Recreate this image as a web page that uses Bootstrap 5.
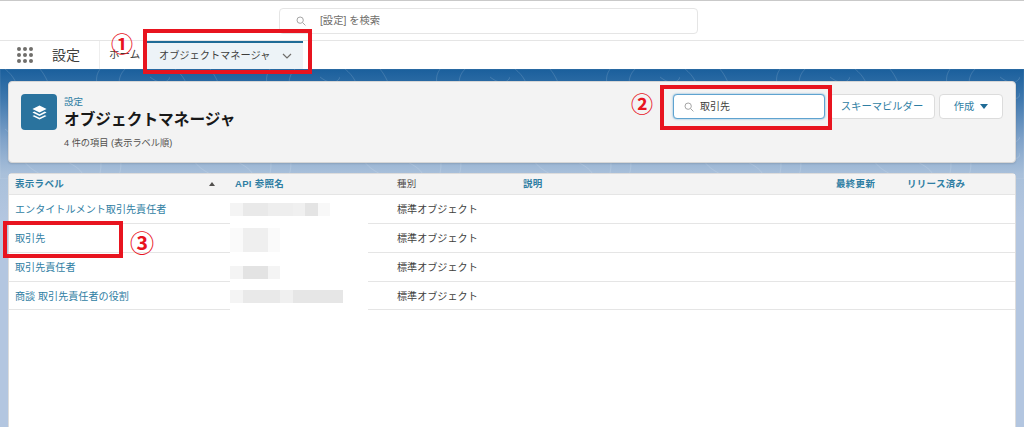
<!DOCTYPE html>
<html lang="ja"><head><meta charset="utf-8"><title>設定</title>
<link href="https://cdn.jsdelivr.net/npm/bootstrap@5.3.0/dist/css/bootstrap.min.css" rel="stylesheet">
<style>
html,body{height:427px;overflow:hidden}
body{position:relative;font-family:"Liberation Sans","Noto Sans CJK JP",sans-serif;font-size:10px;color:#3e3e3c;background:#fff}
.topzone{height:41px;border-top:1px solid #c9c9c9;border-bottom:1px solid #e5e5e5;padding-left:279px}
.gsearch{width:419px;height:26px;border:1px solid #e5e5e5;border-radius:4px;padding-left:16px;gap:14px;color:#706e6b;margin-top:7px;font-size:10.3px}
.tabzone{height:28px}
.waffle{display:grid;grid-template-columns:repeat(3,4px);gap:2px;margin-left:17px;width:16px}
.waffle i{width:4px;height:4px;border-radius:50%;background:#706e6b}
.appname{font-size:14px;margin-left:19px;width:47px;color:#3e3e3c}
.hometab{font-size:10.5px;width:48px;height:28px;border-left:1px solid #eee;padding-left:9px}
.objtab{width:156px;height:28px;background:#edf3f7;border-top:2px solid #1f6b96;font-size:10.2px;padding:0 11px 0 12px;color:#3e3e3c}
.stage{position:relative;height:358px;padding:12px 8px 0;background:linear-gradient(#1a5f9c 0,#3f78ae 30px,#7fa2c9 70px,#a9c0da 105px,#b3c6e0 150px,#b3c6e0 358px)}
.contour{position:absolute;left:0;top:0;width:100%;height:110px}
.headcard{position:relative;height:82px;background:#f3f3f3;border:1px solid #d6d6d6;border-radius:4px;padding:12px 12px;margin-bottom:10px;box-shadow:0 1px 2px rgba(0,0,0,.12)}
.tile{width:36px;height:36px;background:#2a739e;border-radius:4px;margin-right:7px;flex:none}
.crumb{font-size:9.5px;color:#2f7ea3;line-height:11px;margin-top:2px}
.ptitle{font-size:15.7px;font-weight:700;color:#181818;line-height:20px;margin-top:3px}
.pcount{font-size:9.2px;margin-top:7px;color:#514f4d;line-height:12px}
.qfind{width:152px;height:25px;background:#fff;border:1px solid #5fa3d0;border-radius:4px;box-shadow:0 0 2px #5fa3d0;padding-left:10px;gap:6px;color:#3e3e3c;margin-right:4px}
.sfbtn{height:25px;background:#fff;border:1px solid #dcdcdc;border-radius:4px;color:#2f7ea3;font-size:10.3px}
.sbtn1{width:106px;margin-right:4px}.sbtn2{width:64px}
.caretb{width:0;height:0;border:4.5px solid transparent;border-top:5px solid #1f6b96;border-bottom:0;margin-left:6px}
.listcard{position:relative;height:260px;background:#fff;border:1px solid #dcdcdc;border-radius:4px 4px 0 0}
.rowline{display:grid;grid-template-columns:220px 162px 126px 313px 71px 1fr;align-items:center;border-bottom:1px solid #e5e5e5;height:29px;padding-left:6px}
.rowlast{height:28px}
.rowhead{height:21px;background:#f3f3f3;font-weight:700;color:#2f7ea3;font-size:9.5px}
.rowhead .tcell{letter-spacing:.3px}
.rowbody{font-size:10.1px}
.rowbody>div:not(.blurcell){padding-top:2px}
.rowbody a{color:#2f7ea3;text-decoration:none}
.sortup{position:relative}
.sortup::after{content:"";position:absolute;right:20px;top:5px;border:3px solid transparent;border-bottom:4px solid #514f4d;border-top:0}
.tgray{color:#514f4d;font-weight:400}
.blurcell{align-self:stretch;margin:0 29px -1px -5px;background:#fff;display:flex;align-items:center}
.blurbar{display:flex;height:13px}
.blurtall{height:24px;margin-top:3px}
.blurlow{margin-top:10px}
.blurbar i{display:block;height:100%}
.redframe{position:absolute;border:4px solid #e8141f;pointer-events:none}
.numcircle{position:absolute;color:#e8141f;font-weight:700;font-size:22px;line-height:22px;font-family:"Noto Sans CJK JP",sans-serif}
.numbig{font-size:24px;line-height:24px}
</style></head><body>
<div class="topzone d-flex">
  <div class="gsearch d-flex align-items-center">
    <svg width="10" height="10" viewBox="0 0 12 12" fill="none" stroke="#a5a5a5" stroke-width="1.2"><circle cx="5" cy="5" r="3.800"/><path d="M8 8l3.300 3.300"/></svg>
    <span>[設定] を検索</span>
  </div>
</div>
<div class="tabzone d-flex align-items-center">
  <div class="waffle"><i></i><i></i><i></i><i></i><i></i><i></i><i></i><i></i><i></i></div>
  <div class="appname">設定</div>
  <div class="hometab d-flex align-items-center">ホーム</div>
  <div class="objtab d-flex align-items-center justify-content-between"><span>オブジェクトマネージャ</span>
    <svg width="10" height="6" viewBox="0 0 10 6" fill="none" stroke="#706e6b" stroke-width="1.200"><path d="M1 1l4 4 4-4"/></svg></div>
</div>
<div class="stage">
  <svg class="contour" viewBox="0 0 1024 110" preserveAspectRatio="none" fill="none" stroke="#fff" stroke-opacity=".13" stroke-width="1">
    <defs><pattern id="ctr" width="170" height="60" patternUnits="userSpaceOnUse"><path d="M5 0c18 14 10 30 30 42s24 10 30 18M40 0c10 12 8 22 22 30s20 8 28 30M100 0c-12 18 12 26-6 60M125 0c-16 16 8 34-14 60M150 8c10 8 18 6 20 0M150 20c14 14 20 10 20 4"/></pattern></defs>
    <rect width="1024" height="110" fill="url(#ctr)"/>
  </svg>
  <div class="headcard d-flex justify-content-between">
    <div class="d-flex">
      <div class="tile d-flex align-items-center justify-content-center">
        <svg width="17" height="17" viewBox="0 0 18 18" fill="#fff"><path d="M9 1.500l7.500 3.700L9 8.900 1.500 5.200z"/><path d="M3.400 8l5.600 2.800L14.600 8l1.900 1L9 12.700 1.500 9z"/><path d="M3.400 11.800l5.600 2.800 5.600-2.800 1.900 1L9 16.500l-7.500-3.700z"/></svg>
      </div>
      <div><div class="crumb">設定</div><div class="ptitle">オブジェクトマネージャ</div><div class="pcount">4 件の項目 (表示ラベル順)</div></div>
    </div>
    <div class="d-flex align-items-start">
      <div class="qfind d-flex align-items-center">
        <svg width="10" height="10" viewBox="0 0 12 12" fill="none" stroke="#a5a5a5" stroke-width="1.2"><circle cx="5" cy="5" r="3.800"/><path d="M8 8l3.300 3.300"/></svg>
        <span>取引先</span>
      </div>
      <div class="sfbtn sbtn1 d-flex align-items-center justify-content-center">スキーマビルダー</div>
      <div class="sfbtn sbtn2 d-flex align-items-center justify-content-center">作成<span class="caretb"></span></div>
    </div>
  </div>
  <div class="listcard">
    <div class="rowline rowhead">
      <div class="tcell sortup">表示ラベル</div><div class="tcell">API 参照名</div><div class="tcell tgray">種別</div><div class="tcell">説明</div><div class="tcell">最終更新</div><div class="tcell">リリース済み</div>
    </div>
    <div class="rowline rowbody"><div><a href="#">エンタイトルメント取引先責任者</a></div>
      <div class="blurcell"><div class="blurbar"><i style="width:13px;background:#f4f4f4"></i><i style="width:25px;background:#e9e9e9"></i><i style="width:25px;background:#eeeeee"></i><i style="width:12px;background:#f0f0f0"></i><i style="width:13px;background:#e4e4e4"></i><i style="width:12px;background:#f8f8f8"></i></div></div>
      <div>標準オブジェクト</div><div></div><div></div><div></div></div>
    <div class="rowline rowbody"><div><a href="#">取引先</a></div>
      <div class="blurcell"><div class="blurbar blurtall"><i style="width:13px;background:#fafafa"></i><i style="width:25px;background:#efefef"></i><i style="width:12px;background:#fafafa"></i></div></div>
      <div>標準オブジェクト</div><div></div><div></div><div></div></div>
    <div class="rowline rowbody"><div><a href="#">取引先責任者</a></div>
      <div class="blurcell"><div class="blurbar blurlow"><i style="width:13px;background:#f4f4f4"></i><i style="width:25px;background:#e3e3e3"></i><i style="width:12px;background:#f4f4f4"></i></div></div>
      <div>標準オブジェクト</div><div></div><div></div><div></div></div>
    <div class="rowline rowbody rowlast"><div><a href="#">商談 取引先責任者の役割</a></div>
      <div class="blurcell"><div class="blurbar"><i style="width:13px;background:#f4f4f4"></i><i style="width:37px;background:#e9e9e9"></i><i style="width:13px;background:#f0f0f0"></i><i style="width:50px;background:#e6e6e6"></i></div></div>
      <div>標準オブジェクト</div><div></div><div></div><div></div></div>
  </div>
</div>
<div class="redframe" style="left:143px;top:29px;width:169px;height:45px"></div>
<div class="redframe" style="left:660px;top:85px;width:172px;height:45px"></div>
<div class="redframe" style="left:3px;top:221px;width:120px;height:37px"></div>
<div class="numcircle" style="left:111px;top:31px">①</div>
<div class="numcircle" style="left:631px;top:91px">②</div>
<div class="numcircle numbig" style="left:130px;top:230px">③</div>
<script src="https://cdn.jsdelivr.net/npm/bootstrap@5.3.0/dist/js/bootstrap.bundle.min.js"></script>
</body></html>
